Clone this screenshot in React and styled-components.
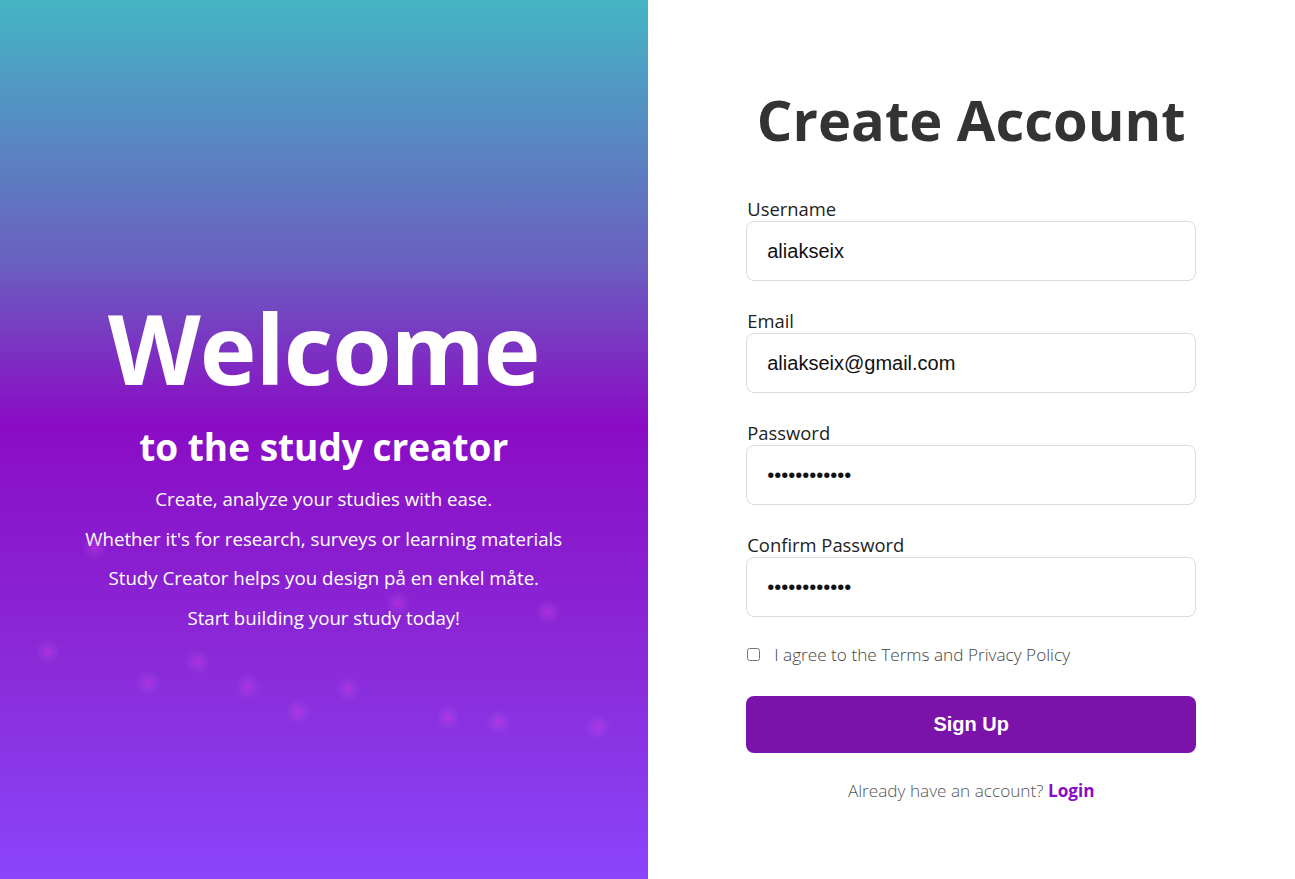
import styled, { createGlobalStyle } from 'styled-components'

const GlobalStyle = createGlobalStyle`
  html, body {
    margin: 0;
    padding: 0;
    height: 100%;
  }
  body {
    font-family: "Open Sans", "Noto Sans", sans-serif;
  }
  * { box-sizing: border-box; }
`

const Page = styled.div`
  display: flex;
  width: 100%;
  height: 100vh;
  overflow: hidden;
`

const Hero = styled.section`
  position: relative;
  flex: 1 1 50%;
  display: flex;
  flex-direction: column;
  align-items: center;
  justify-content: center;
  padding-top: 48px;
  color: #fff;
  background: linear-gradient(to bottom, #44b5c4 0%, #6a5fc0 30%, #8a0cc4 48%, #8a2ad8 75%, #8b45fb 100%);
`

const Glow = styled.span`
  position: absolute;
  width: 26px;
  height: 26px;
  margin: -13px 0 0 -13px;
  border-radius: 50%;
  background: radial-gradient(circle, rgba(222, 50, 230, 0.5) 0%, rgba(215, 70, 235, 0.28) 20%, rgba(200, 110, 240, 0.1) 45%, rgba(180, 90, 240, 0) 70%);
  pointer-events: none;
`

const Title = styled.h1`
  margin: 0;
  font-size: 96px;
  font-weight: 700;
  line-height: 1.2;
  letter-spacing: -1px;
`

const Subtitle = styled.h2`
  margin: 18px 0 8px;
  font-size: 37px;
  font-weight: 700;
  line-height: 1.3;
`

const Line = styled.p`
  margin: 0;
  font-size: 18.7px;
  line-height: 39.5px;
  text-align: center;
`

const FormSide = styled.section`
  flex: 1 1 50%;
  display: flex;
  flex-direction: column;
  align-items: center;
  padding-top: 86px;
  background: #fff;
`

const Heading = styled.h1`
  margin: 0 0 44px;
  font-size: 56px;
  font-weight: 700;
  line-height: 1.2;
  color: #333;
`

const Form = styled.form`
  width: 450px;
  display: flex;
  flex-direction: column;
`

const Field = styled.div`
  display: flex;
  flex-direction: column;
  margin-bottom: 28px;
`

const Label = styled.label`
  font-size: 18.4px;
  line-height: 24px;
  color: #222;
  margin-left: 1px;
`

const Input = styled.input`
  height: 60px;
  padding: 0 20px;
  border: 1px solid #dcdcdc;
  border-radius: 8px;
  font-family: "Liberation Sans", Arial, sans-serif;
  font-size: 20px;
  color: #111;
  background: #fff;
  outline: none;
`

const Agree = styled.label`
  display: flex;
  align-items: center;
  gap: 14px;
  margin: -2px 0 30px;
  font-size: 17.2px;
  font-weight: 300;
  color: #444;
`

const Check = styled.input`
  width: 13px;
  height: 13px;
  margin: 0 0 0 1px;
`

const Submit = styled.button`
  height: 57px;
  border: none;
  border-radius: 8px;
  background: #7b12aa;
  color: #fff;
  font-family: "Liberation Sans", Arial, sans-serif;
  font-size: 20px;
  font-weight: 700;
  cursor: pointer;
`

const Footer = styled.p`
  margin: 26px 0 0;
  text-align: center;
  font-size: 17.2px;
  font-weight: 300;
  color: #555;
`

const LoginLink = styled.a`
  color: #8a0cc4;
  font-weight: 700;
  text-decoration: none;
`

const glows = [
  [48, 652], [95, 548], [148, 683], [198, 662], [248, 687], [298, 712],
  [348, 689], [398, 603], [448, 718], [498, 722], [548, 612], [598, 727],
]

const fields = [
  { id: 'username', label: 'Username', type: 'text', value: 'aliakseix' },
  { id: 'email', label: 'Email', type: 'email', value: 'aliakseix@gmail.com' },
  { id: 'password', label: 'Password', type: 'password', value: 'aliakseix123' },
  { id: 'confirm', label: 'Confirm Password', type: 'password', value: 'aliakseix123' },
]

export default function App() {
  return (
    <>
      <GlobalStyle />
      <Page>
        <Hero>
          {glows.map(([x, y]) => (
            <Glow key={`${x}-${y}`} style={{ left: x, top: y }} />
          ))}
          <Title>Welcome</Title>
          <Subtitle>to the study creator</Subtitle>
          <Line>Create, analyze your studies with ease.</Line>
          <Line>Whether it's for research, surveys or learning materials</Line>
          <Line>Study Creator helps you design på en enkel måte.</Line>
          <Line>Start building your study today!</Line>
        </Hero>

        <FormSide>
          <Heading>Create Account</Heading>
          <Form onSubmit={(e) => e.preventDefault()}>
            {fields.map((f) => (
              <Field key={f.id}>
                <Label htmlFor={f.id}>{f.label}</Label>
                <Input id={f.id} type={f.type} defaultValue={f.value} />
              </Field>
            ))}
            <Agree>
              <Check type="checkbox" />
              I agree to the Terms and Privacy Policy
            </Agree>
            <Submit type="submit">Sign Up</Submit>
            <Footer>
              Already have an account? <LoginLink href="#">Login</LoginLink>
            </Footer>
          </Form>
        </FormSide>
      </Page>
    </>
  )
}
